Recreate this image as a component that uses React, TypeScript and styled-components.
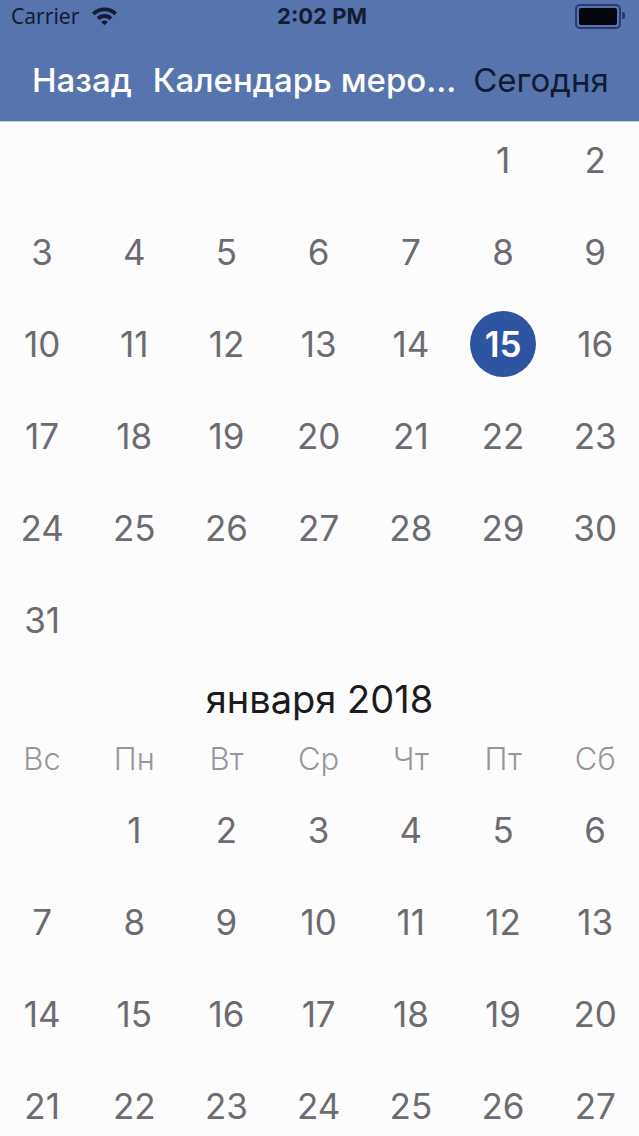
import React from "react";
import styled, { createGlobalStyle } from "styled-components";

const GlobalStyle = createGlobalStyle`
  html, body {
    margin: 0;
    padding: 0;
    background: #fdfcfd;
    overflow: hidden;
    font-family: Inter, "Noto Sans", sans-serif;
  }
`;

const Page = styled.div`
  width: 639px;
  height: 1136px;
  background: #fdfcfd;
  overflow: hidden;
`;

const Header = styled.header`
  background: #5674ad;
  border-bottom: 1px solid #c9d3e6;
`;

const StatusBar = styled.div`
  height: 32px;
  display: grid;
  grid-template-columns: 1fr auto 1fr;
  align-items: center;
  padding: 0 10px 0 11px;
  color: #141b33;
`;

const StatusLeft = styled.div`
  display: flex;
  align-items: center;
  gap: 12px;
  font-size: 21px;
  font-family: "Noto Sans", Inter, sans-serif;
`;

const Clock = styled.div`
  font-size: 22px;
  font-weight: 700;
  font-family: Inter, sans-serif;
  margin-left: 4px;
`;

const StatusRight = styled.div`
  display: flex;
  justify-content: flex-end;
  align-items: center;
`;

const Battery = styled.div`
  position: relative;
  width: 38px;
  height: 17px;
  border: 2px solid #2a3970;
  border-radius: 5px;
  padding: 2px;
  box-sizing: content-box;
  margin-right: 8px;
  &::after {
    content: "";
    position: absolute;
    right: -6px;
    top: 6px;
    width: 3px;
    height: 7px;
    border-radius: 0 2px 2px 0;
    background: #2a3970;
  }
`;

const BatteryFill = styled.div`
  width: 100%;
  height: 100%;
  background: #05070f;
  border-radius: 2px;
`;

const NavBar = styled.nav`
  height: 89px;
  display: flex;
  align-items: center;
  padding: 6px 0 0 32px;
  box-sizing: border-box;
  font-size: 33px;
  font-weight: 500;
`;

const NavItem = styled.span<{ $dark?: boolean; $gap?: number }>`
  color: ${(p) => (p.$dark ? "#121a33" : "#ffffff")};
  font-weight: ${(p) => (p.$dark ? 400 : 500)};
  margin-right: ${(p) => p.$gap ?? 0}px;
  white-space: nowrap;
`;

const MonthGrid = styled.div`
  display: grid;
  grid-template-columns: repeat(7, 92.2px);
  margin-left: -4px;
`;

const Cell = styled.div`
  height: 92px;
  display: flex;
  justify-content: center;
  align-items: flex-start;
`;

const Day = styled.div<{ $selected?: boolean }>`
  width: 66px;
  height: 66px;
  margin-top: 5px;
  border-radius: 50%;
  display: flex;
  align-items: center;
  justify-content: center;
  font-size: 35px;
  font-weight: ${(p) => (p.$selected ? 600 : 400)};
  color: ${(p) => (p.$selected ? "#ffffff" : "#6c6c70")};
  background: ${(p) => (p.$selected ? "#2e55a2" : "transparent")};
`;

const MonthTitle = styled.div`
  height: 50px;
  display: flex;
  align-items: center;
  justify-content: center;
  font-size: 38px;
  color: #1b1b1d;
`;

const WeekdayCell = styled.div`
  height: 68px;
  display: flex;
  align-items: center;
  justify-content: center;
  font-size: 31px;
  font-weight: 300;
  color: #97979b;
`;

const WifiIcon = () => (
  <svg width="27" height="20" viewBox="0 0 27 20">
    <path d="M1 6.5 A18 18 0 0 1 26 6.5 L23.3 9.3 A14 14 0 0 0 3.7 9.3 Z" fill="#141b33" />
    <path d="M5.6 11.2 A11.5 11.5 0 0 1 21.4 11.2 L18.7 14 A7.6 7.6 0 0 0 8.3 14 Z" fill="#141b33" />
    <path d="M10.2 15.9 A5 5 0 0 1 16.8 15.9 L13.5 19.3 Z" fill="#141b33" />
  </svg>
);

type MonthProps = { offset: number; days: number; selected?: number; weeks?: number };

const Month = ({ offset, days, selected, weeks }: MonthProps) => {
  const cells: (number | null)[] = [];
  for (let i = 0; i < offset; i++) cells.push(null);
  for (let d = 1; d <= days; d++) cells.push(d);
  const shown = weeks ? cells.slice(0, weeks * 7) : cells;
  return (
    <MonthGrid>
      {shown.map((d, i) => (
        <Cell key={i}>{d !== null && <Day $selected={d === selected}>{d}</Day>}</Cell>
      ))}
    </MonthGrid>
  );
};

const weekdays = ["Вс", "Пн", "Вт", "Ср", "Чт", "Пт", "Сб"];

export default function App() {
  return (
    <Page>
      <GlobalStyle />
      <Header>
        <StatusBar>
          <StatusLeft>
            <span>Carrier</span>
            <WifiIcon />
          </StatusLeft>
          <Clock>2:02 PM</Clock>
          <StatusRight>
            <Battery>
              <BatteryFill />
            </Battery>
          </StatusRight>
        </StatusBar>
        <NavBar>
          <NavItem $gap={21}>Назад</NavItem>
          <NavItem $gap={17}>Календарь меро...</NavItem>
          <NavItem $dark>Сегодня</NavItem>
        </NavBar>
      </Header>
      <Month offset={5} days={31} selected={15} />
      <MonthTitle>января 2018</MonthTitle>
      <MonthGrid>
        {weekdays.map((w) => (
          <WeekdayCell key={w}>{w}</WeekdayCell>
        ))}
      </MonthGrid>
      <Month offset={1} days={31} weeks={4} />
    </Page>
  );
}
